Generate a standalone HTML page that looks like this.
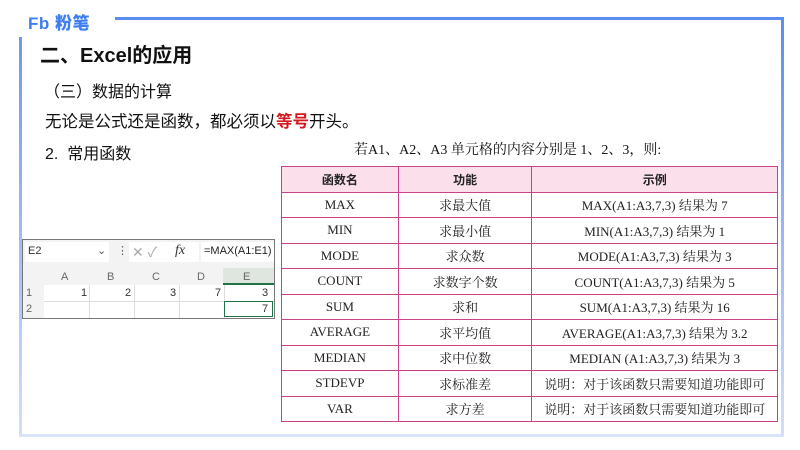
<!DOCTYPE html>
<html><head><meta charset="utf-8">
<style>
*{margin:0;padding:0;box-sizing:border-box}
body{width:800px;height:450px;background:#fff;position:relative;overflow:hidden;font-family:"Liberation Sans","Noto Sans CJK SC",sans-serif;color:#111}
.abs{position:absolute}
.logo{left:28px;top:9px;font-size:17px;font-weight:900;color:#3f7ef2;letter-spacing:0.5px;white-space:nowrap}
.topline{left:115px;top:17px;width:668px;height:3px;background:#5b8df0}
.lframe{left:19px;top:37px;width:3px;height:399px;background:linear-gradient(#6f96f0,#d4defb)}
.rframe{left:781px;top:17px;width:3px;height:419px;background:linear-gradient(#5b8df0,#d4defb)}
.bframe{left:19px;top:434px;width:765px;height:3px;background:#d9e3fb}
.t1{left:40px;top:39px;font-size:20px;font-weight:bold}
.t2{left:44px;top:78px;font-size:16px}
.t3{left:45px;top:108px;font-size:16.5px}
.t4{left:45px;top:140px;font-size:16px}
.t5{left:354px;top:139px;font-size:14px;font-family:"Liberation Serif","Noto Serif CJK SC",serif}
table{position:absolute;left:281px;top:166px;width:497px;border-collapse:collapse;font-family:"Liberation Serif","Noto Serif CJK SC",serif;font-size:13px;color:#222}
td{border:1.3px solid #c8448a;height:25.5px;text-align:center;padding:0}
tr.h td{background:#fbe0ec;font-weight:bold;font-family:"Liberation Sans","Noto Sans CJK SC",sans-serif;font-size:12px}
.xl{left:22px;top:239px;width:253px;height:80px;border:1px solid #777;background:#f3f3f3;font-size:11px;color:#333}
</style></head><body>
<div class="abs logo">Fb 粉笔</div>
<div class="abs topline"></div>
<div class="abs lframe"></div>
<div class="abs rframe"></div>
<div class="abs bframe"></div>
<div class="abs t1">二、Excel的应用</div>
<div class="abs t2">（三）数据的计算</div>
<div class="abs t3">无论是公式还是函数，都必须以<b style="color:#d4191d">等号</b>开头。</div>
<div class="abs t4">2.&nbsp;&nbsp;常用函数</div>
<div class="abs t5">若A1、A2、A3 单元格的内容分别是 1、2、3，则:</div>
<div class="abs xl">
  <div class="abs" style="left:2px;top:2px;width:84px;height:20px;background:#fff"></div>
  <div class="abs" style="left:5px;top:5px">E2</div>
  <div class="abs" style="left:74px;top:4px;color:#555">⌄</div>
  <div class="abs" style="left:94px;top:4px;color:#555">⋮</div>
  <div class="abs" style="left:106px;top:2px;width:70px;height:20px;background:#fff"></div>
  <div class="abs" style="left:109px;top:2px;color:#aaa;font-size:14px">✕ ✓</div>
  <div class="abs" style="left:152px;top:3px;font-family:'Liberation Serif',serif;font-style:italic;font-size:14px;color:#333">fx</div>
  <div class="abs" style="left:178px;top:2px;width:73px;height:20px;background:#fff"></div>
  <div class="abs" style="left:181px;top:5px;color:#222">=MAX(A1:E1)</div>
  <div class="abs" style="left:0;top:28px;width:251px;height:50px;background:#fff"></div>
  <div class="abs" style="left:0;top:28px;width:251px;height:17px;background:#f3f3f3"></div>
  <div class="abs" style="left:200px;top:28px;width:51px;height:17px;background:#dfe6df;border-bottom:2px solid #217346"></div>
  <div class="abs" style="left:0;top:28px;width:21px;height:50px;background:#f3f3f3"></div>
  <div class="abs" style="left:38px;top:31px;color:#666">A</div>
  <div class="abs" style="left:84px;top:31px;color:#666">B</div>
  <div class="abs" style="left:129px;top:31px;color:#666">C</div>
  <div class="abs" style="left:174px;top:31px;color:#666">D</div>
  <div class="abs" style="left:220px;top:31px;color:#666">E</div>
  <div class="abs" style="left:3px;top:47px;color:#666">1</div>
  <div class="abs" style="left:3px;top:63px;color:#666">2</div>
  <div class="abs" style="left:21px;top:61px;width:230px;height:1px;background:#ddd"></div>
  <div class="abs" style="left:66px;top:45px;width:1px;height:33px;background:#ddd"></div>
  <div class="abs" style="left:111px;top:45px;width:1px;height:33px;background:#ddd"></div>
  <div class="abs" style="left:156px;top:45px;width:1px;height:33px;background:#ddd"></div>
  <div class="abs" style="left:201px;top:45px;width:1px;height:33px;background:#ddd"></div>
  <div class="abs" style="left:58px;top:47px">1</div>
  <div class="abs" style="left:102px;top:47px">2</div>
  <div class="abs" style="left:147px;top:47px">3</div>
  <div class="abs" style="left:192px;top:47px">7</div>
  <div class="abs" style="left:239px;top:47px">3</div>
  <div class="abs" style="left:201px;top:61px;width:49px;height:16px;border:1.5px solid #217346"></div>
  <div class="abs" style="left:239px;top:63px">7</div>
</div>
<table>
<colgroup><col style="width:117px"><col style="width:134px"><col style="width:246px"></colgroup>
<tr class="h"><td>函数名</td><td>功能</td><td>示例</td></tr>
<tr><td>MAX</td><td>求最大值</td><td>MAX(A1:A3,7,3) 结果为 7</td></tr>
<tr><td>MIN</td><td>求最小值</td><td>MIN(A1:A3,7,3) 结果为 1</td></tr>
<tr><td>MODE</td><td>求众数</td><td>MODE(A1:A3,7,3) 结果为 3</td></tr>
<tr><td>COUNT</td><td>求数字个数</td><td>COUNT(A1:A3,7,3) 结果为 5</td></tr>
<tr><td>SUM</td><td>求和</td><td>SUM(A1:A3,7,3) 结果为 16</td></tr>
<tr><td>AVERAGE</td><td>求平均值</td><td>AVERAGE(A1:A3,7,3) 结果为 3.2</td></tr>
<tr><td>MEDIAN</td><td>求中位数</td><td>MEDIAN (A1:A3,7,3) 结果为 3</td></tr>
<tr><td>STDEVP</td><td>求标准差</td><td>说明：对于该函数只需要知道功能即可</td></tr>
<tr><td>VAR</td><td>求方差</td><td>说明：对于该函数只需要知道功能即可</td></tr>
</table>
</body></html>
